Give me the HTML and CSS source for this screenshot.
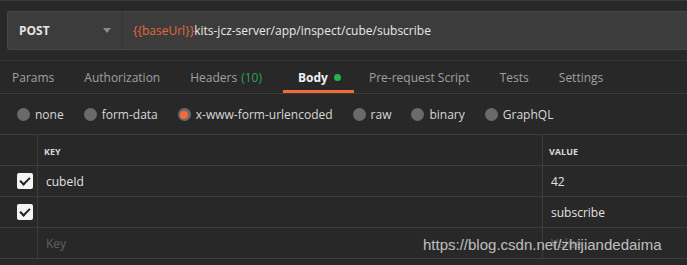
FILE: index.html
```html
<!DOCTYPE html>
<html lang="en">
	<head>
		<meta charset="UTF-8" />
		<meta name="viewport" content="width=device-width, initial-scale=1.0" />
		<title>Request Body</title>
		<link rel="stylesheet" href="styles.css">
	</head>
	<body>
		<div class="url-bar">
			<div class="method">
				<span>POST</span>
				<span class="caret"></span>
			</div>
			<div class="url-input">
				<span class="var">{{baseUrl}}</span>kits-jcz-server/app/inspect/cube/subscribe
			</div>
		</div>

		<div class="tabs">
			<div class="tab">Params</div>
			<div class="tab">Authorization</div>
			<div class="tab">Headers <span class="count">(10)</span></div>
			<div class="tab active">Body <span class="dot"></span></div>
			<div class="tab">Pre-request Script</div>
			<div class="tab">Tests</div>
			<div class="tab">Settings</div>
		</div>

		<div class="body-types">
			<label class="radio"><span class="circle"></span>none</label>
			<label class="radio"><span class="circle"></span>form-data</label>
			<label class="radio"><span class="circle checked"></span>x-www-form-urlencoded</label>
			<label class="radio"><span class="circle"></span>raw</label>
			<label class="radio"><span class="circle"></span>binary</label>
			<label class="radio"><span class="circle"></span>GraphQL</label>
		</div>

		<div class="kv-table">
			<div class="row head">
				<div class="cell check"></div>
				<div class="cell key">KEY</div>
				<div class="cell value">VALUE</div>
			</div>
			<div class="row">
				<div class="cell check"><span class="box"></span></div>
				<div class="cell key">cubeId</div>
				<div class="cell value">42</div>
			</div>
			<div class="row">
				<div class="cell check"><span class="box"></span></div>
				<div class="cell key"></div>
				<div class="cell value">subscribe</div>
			</div>
			<div class="row">
				<div class="cell check"></div>
				<div class="cell key placeholder">Key</div>
				<div class="cell value placeholder">Value</div>
			</div>
		</div>

		<div class="watermark">https://blog.csdn.net/zhijiandedaima</div>
	</body>
</html>
```

FILE: styles.css
```css
body {
	margin: 0;
	background-color: #282828;
	border-top: 1px solid #383838;
	font-family: 'Open Sans', 'Noto Sans', sans-serif;
	font-size: 12px;
	color: #d6d6d6;
	position: relative;
	height: 264px;
	overflow: hidden;
}
.url-bar {
	display: flex;
	margin: 10px 0 0 7px;
	height: 37px;
	background: #3c3c3c;
	border: 1px solid #464646;
	border-right: none;
	border-radius: 3px 0 0 3px;
}
.method {
	width: 103px;
	padding-left: 11px;
	display: flex;
	align-items: center;
	justify-content: space-between;
	font-weight: 700;
	color: #e4e4e4;
	border-right: 1px solid #333333;
}
.caret {
	width: 0;
	height: 0;
	margin-right: 11px;
	border-left: 4px solid transparent;
	border-right: 4px solid transparent;
	border-top: 5px solid #8a8a8a;
}
.url-input {
	display: flex;
	align-items: center;
	padding-left: 10px;
	color: #e8e8e8;
}
.var {
	color: #e8663a;
}
.tabs {
	display: flex;
	margin-top: 10px;
	margin-left: -3px;
	height: 32px;
	border-top: 1px solid #333333;
	border-bottom: 1px solid #3a3a3a;
}
.tab {
	display: flex;
	align-items: center;
	padding: 0 15px;
	color: #a0a0a0;
	border-bottom: 3px solid transparent;
	box-sizing: border-box;
	height: 32px;
	padding-top: 3px;
}
.tab.active {
	margin-left: 6px;
	padding-right: 13px;
	color: #f2f2f2;
	font-weight: 700;
	border-bottom-color: #f26b3a;
}
.count {
	color: #29a35a;
	margin-left: 4px;
}
.dot {
	display: inline-block;
	width: 7px;
	height: 7px;
	margin-left: 6px;
	border-radius: 50%;
	background: #26b24b;
}
.body-types {
	display: flex;
	align-items: center;
	gap: 20px;
	height: 40px;
	padding-left: 17px;
	padding-top: 1px;
	box-sizing: border-box;
}
.radio {
	display: flex;
	align-items: center;
	color: #d8d8d8;
}
.circle {
	width: 13px;
	height: 13px;
	margin-right: 5px;
	border-radius: 50%;
	background: #6a6a6a;
	display: flex;
	align-items: center;
	justify-content: center;
}
.circle.checked::after {
	content: '';
	width: 8px;
	height: 8px;
	border-radius: 50%;
	background: #f26b3a;
}
.kv-table {
	border-top: 1px solid #3c3c3c;
}
.row {
	display: grid;
	grid-template-columns: 37px 505px 1fr;
	height: 30px;
	border-bottom: 1px solid #3c3c3c;
}
.cell {
	display: flex;
	align-items: center;
	padding-left: 8px;
	color: #e2e2e2;
}
.cell.key,
.cell.value {
	border-left: 1px solid #3c3c3c;
}
.cell.check {
	justify-content: flex-end;
	padding: 0 4px 0 0;
}
.head .cell {
	font-size: 9px;
	font-weight: 700;
	color: #d8d8d8;
	padding-left: 6px;
	padding-top: 2px;
}
.head .cell.check {
	padding: 0;
}
.placeholder {
	color: #606060 !important;
}
.box {
	width: 16px;
	height: 16px;
	border-radius: 2px;
	background: #f4f4f4;
	position: relative;
}
.box::after {
	content: '';
	position: absolute;
	left: 5px;
	top: 2px;
	width: 4px;
	height: 8px;
	border-right: 2px solid #222;
	border-bottom: 2px solid #222;
	transform: rotate(45deg);
}
.watermark {
	position: absolute;
	left: 423px;
	top: 235px;
	font-family: 'Liberation Sans', Arial, sans-serif;
	font-size: 15px;
	color: rgba(230, 230, 230, 0.8);
}
```
